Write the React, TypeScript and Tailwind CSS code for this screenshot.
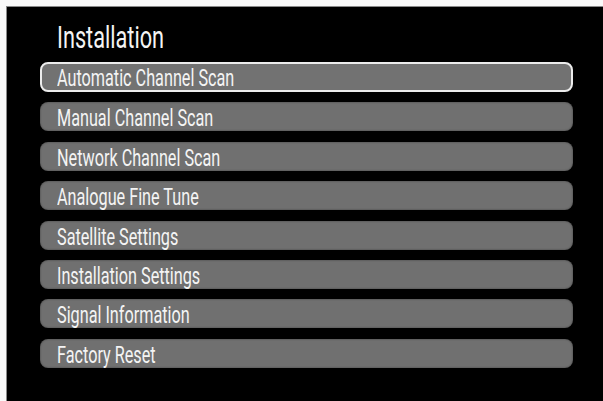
import * as React from "react";

const items = [
  "Automatic Channel Scan",
  "Manual Channel Scan",
  "Network Channel Scan",
  "Analogue Fine Tune",
  "Satellite Settings",
  "Installation Settings",
  "Signal Information",
  "Factory Reset",
];

const App = () => {
  return (
    <div className="w-[603px] h-[401px] overflow-hidden bg-[#fafafa] pt-[6px] pl-[6px] font-['Roboto','Liberation_Sans',sans-serif]">
      <div className="h-full bg-black border-t border-l border-[#8a8a8a] pt-[11px] pl-[33px] pr-[30px]">
        <h1 className="h-[40px] leading-[40px] mb-[4px] pl-[17px] text-[31px] font-normal text-[#f4f4f4] whitespace-nowrap">
          <span className="inline-block origin-left scale-x-[0.7]">Installation</span>
        </h1>
        <ul className="flex flex-col gap-[10.4px]">
          {items.map((label, i) => (
            <li
              key={label}
              className={
                i === 0
                  ? "h-[30px] rounded-[8px] bg-[#727272] border-2 border-[#ececec] pl-[15px] text-[23px] font-normal leading-[30px] text-[#f4f4f4] whitespace-nowrap"
                  : "h-[29px] rounded-[8px] bg-[#707070] shadow-[inset_0_0_2px_rgba(0,0,0,0.5)] pl-[17px] text-[23px] font-normal leading-[33px] text-[#f4f4f4] whitespace-nowrap"
              }
            >
              <span className="inline-block origin-left scale-x-[0.705]">{label}</span>
            </li>
          ))}
        </ul>
      </div>
    </div>
  );
};

export default App;
